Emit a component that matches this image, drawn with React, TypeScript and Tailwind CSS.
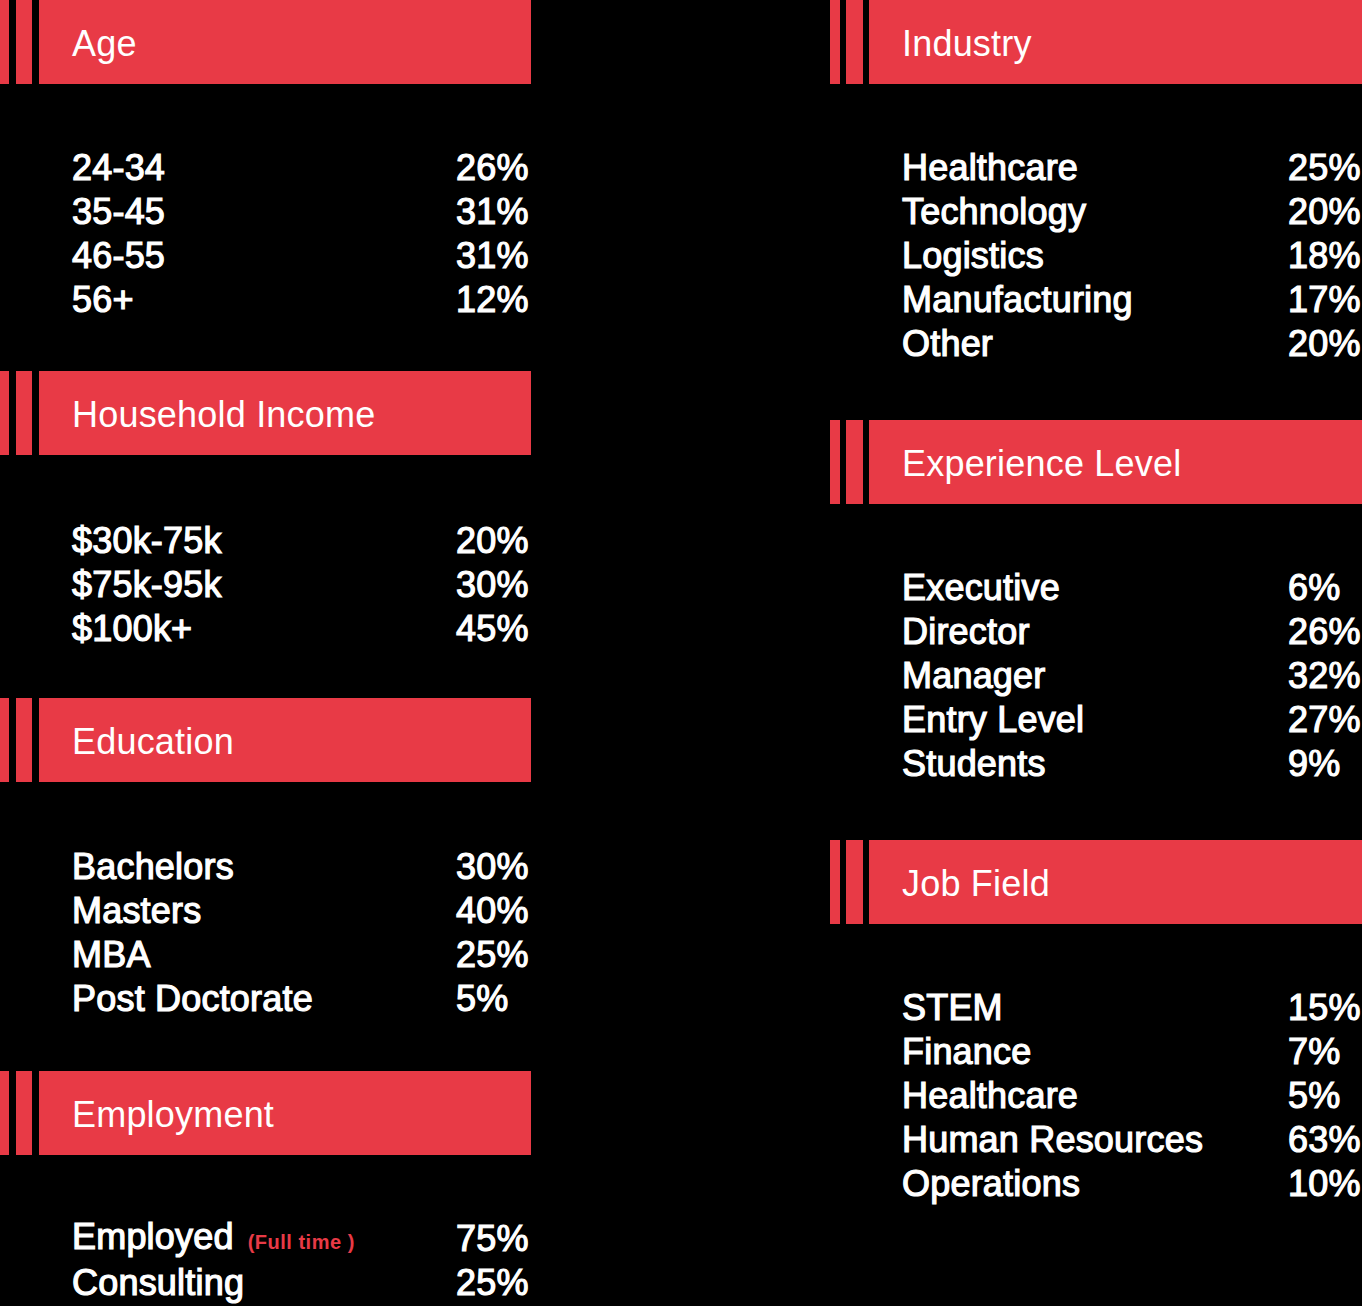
type Row = { label: string; value: string; note?: string };

type Section = {
  title: string;
  top: string;
  rowsTop: string;
  rows: Row[];
};

const left: Section[] = [
  {
    title: "Age",
    top: "mt-0",
    rowsTop: "mt-[62px]",
    rows: [
      { label: "24-34", value: "26%" },
      { label: "35-45", value: "31%" },
      { label: "46-55", value: "31%" },
      { label: "56+", value: "12%" },
    ],
  },
  {
    title: "Household Income",
    top: "mt-[49px]",
    rowsTop: "mt-[64px]",
    rows: [
      { label: "$30k-75k", value: "20%" },
      { label: "$75k-95k", value: "30%" },
      { label: "$100k+", value: "45%" },
    ],
  },
  {
    title: "Education",
    top: "mt-[47px]",
    rowsTop: "mt-[63px]",
    rows: [
      { label: "Bachelors", value: "30%" },
      { label: "Masters", value: "40%" },
      { label: "MBA", value: "25%" },
      { label: "Post Doctorate", value: "5%" },
    ],
  },
  {
    title: "Employment",
    top: "mt-[50px]",
    rowsTop: "mt-[62px]",
    rows: [
      { label: "Employed", value: "75%", note: "(Full time )" },
      { label: "Consulting", value: "25%" },
    ],
  },
];

const right: Section[] = [
  {
    title: "Industry",
    top: "mt-0",
    rowsTop: "mt-[62px]",
    rows: [
      { label: "Healthcare", value: "25%" },
      { label: "Technology", value: "20%" },
      { label: "Logistics", value: "18%" },
      { label: "Manufacturing", value: "17%" },
      { label: "Other", value: "20%" },
    ],
  },
  {
    title: "Experience Level",
    top: "mt-[54px]",
    rowsTop: "mt-[62px]",
    rows: [
      { label: "Executive", value: "6%" },
      { label: "Director", value: "26%" },
      { label: "Manager", value: "32%" },
      { label: "Entry Level", value: "27%" },
      { label: "Students", value: "9%" },
    ],
  },
  {
    title: "Job Field",
    top: "mt-[54px]",
    rowsTop: "mt-[62px]",
    rows: [
      { label: "STEM", value: "15%" },
      { label: "Finance", value: "7%" },
      { label: "Healthcare", value: "5%" },
      { label: "Human Resources", value: "63%" },
      { label: "Operations", value: "10%" },
    ],
  },
];

const Header = ({ title, wide }: { title: string; wide?: boolean }) => (
  <div className="flex h-[84px]">
    <div className={wide ? "w-[10px] bg-[#e83a46]" : "w-[9px] bg-[#e83a46]"} />
    <div className={wide ? "w-[6px]" : "w-[7px]"} />
    <div className={wide ? "w-[17px] bg-[#e83a46]" : "w-[16px] bg-[#e83a46]"} />
    <div className={wide ? "w-[6px]" : "w-[7px]"} />
    <div className="flex flex-1 items-center bg-[#e83a46] pl-[33px] pt-[4px] text-[36px] tracking-[0.2px] text-white">
      {title}
    </div>
  </div>
);

const Block = ({ section, wide }: { section: Section; wide?: boolean }) => (
  <div className={section.top}>
    <Header title={section.title} wide={wide} />
    <div className={section.rowsTop}>
      {section.rows.map((r) => (
        <div key={r.label} className="flex h-[44px] items-center pl-[72px] text-[36px] leading-[44px] tracking-[0.2px] text-white [-webkit-text-stroke:1.2px_white]">
          <div className={wide ? "w-[386px] whitespace-nowrap" : "w-[384px] whitespace-nowrap"}>
            {r.label}
            {r.note && (
              <span className="ml-[14px] text-[20px] font-bold tracking-[0.5px] text-[#e83a46] [-webkit-text-stroke:0px_transparent]">
                {r.note}
              </span>
            )}
          </div>
          <div>{r.value}</div>
        </div>
      ))}
    </div>
  </div>
);

export default function App() {
  return (
    <div className="flex h-[1306px] w-[1362px] overflow-hidden bg-black font-['Liberation_Sans',Arial,sans-serif]">
      <div className="w-[531px]">
        {left.map((s) => (
          <Block key={s.title} section={s} />
        ))}
      </div>
      <div className="ml-[299px] w-[532px]">
        {right.map((s) => (
          <Block key={s.title} section={s} wide />
        ))}
      </div>
    </div>
  );
}
